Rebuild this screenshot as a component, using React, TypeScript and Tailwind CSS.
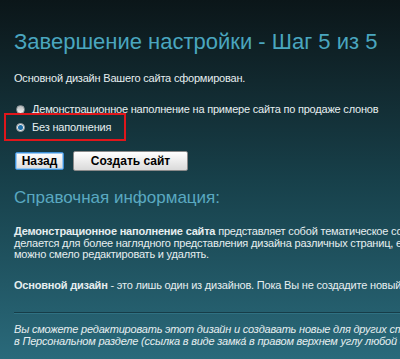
import React from "react";

export default function App() {
  return (
    <div
      className="w-[400px] h-[359px] overflow-hidden bg-gradient-to-b from-[#0b1619] via-[#17404a] to-[#2a6a7b] text-[#e6eef0] text-[11px] leading-[12px] tracking-[-0.2px]"
      style={{ fontFamily: '"Liberation Sans", Arial, sans-serif' }}
    >
      <div className="pl-[14px] pt-[29px] whitespace-nowrap">
        <h1 className="text-[22px] leading-[26px] text-[#4aa6bf] tracking-[0px]">
          Завершение настройки - Шаг 5 из 5
        </h1>
        <p className="mt-[17px]">Основной дизайн Вашего сайта сформирован.</p>

        <div className="mt-[19px] flex flex-col -ml-[10px]">
          <label className="flex items-center gap-[7px] pl-[12px] h-[12px]">
            <span className="w-[9px] h-[9px] rounded-full bg-gradient-to-b from-[#b8bcbe] to-[#f2f4f4] border border-[#8a9296]" />
            <span>Демонстрационное наполнение на примере сайта по продаже слонов</span>
          </label>
          <label className="-mt-[2px] flex items-center gap-[7px] pl-[10px] border-2 border-[#e0161b] w-[122px] h-[28px]">
            <span className="w-[9px] h-[9px] rounded-full bg-[#e9eef0] border border-[#8a9296] flex items-center justify-center">
              <span className="w-[5px] h-[5px] rounded-full bg-[#1f6fa8]" />
            </span>
            <span>Без наполнения</span>
          </label>
        </div>

        <div className="mt-[10px] flex gap-[9px] items-center">
          <button className="w-[49px] h-[18px] ml-[1px] border border-[#3d8fd6] rounded-[2px] bg-gradient-to-b from-white to-[#dcdcdc] text-black font-bold text-[12px] leading-[16px] tracking-[0px] shadow-[inset_0_0_0_1px_#9cc9f0]">
            Назад
          </button>
          <button className="w-[115px] h-[20px] border border-[#8a8a8a] rounded-[2px] bg-gradient-to-b from-white to-[#dadada] text-black font-bold text-[12px] leading-[18px] tracking-[0px]">
            Создать сайт
          </button>
        </div>

        <h2 className="mt-[18px] text-[17px] leading-[18px] text-[#5aa9c1] tracking-[0px]">
          Справочная информация:
        </h2>

        <p className="mt-[19px] leading-[11.5px]">
          <b>Демонстрационное наполнение сайта</b> представляет собой тематическое содержимое,
          <br />
          делается для более наглядного представления дизайна различных страниц, его
          <br />
          можно смело редактировать и удалять.
        </p>

        <p className="mt-[18px]">
          <b>Основной дизайн</b> - это лишь один из дизайнов. Пока Вы не создадите новый
        </p>

        <div className="mt-[21px] h-[2px] bg-[#163d48] border-b border-[#2f7182]" />

        <p className="mt-[9px] italic leading-[12.5px]">
          Вы сможете редактировать этот дизайн и создавать новые для других страниц
          <br />
          в Персональном разделе (ссылка в виде замка́ в правом верхнем углу любой страницы)
        </p>
      </div>
    </div>
  );
}
